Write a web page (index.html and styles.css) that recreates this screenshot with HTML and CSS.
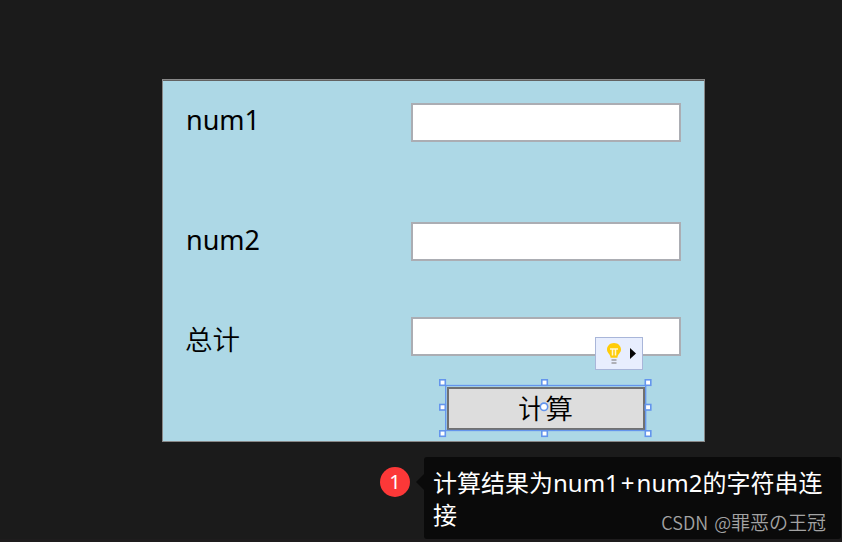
FILE: index.html
```html
<!DOCTYPE html>
<html lang="zh-CN">
<head>
<meta charset="utf-8">
<title>num1 + num2</title>
<link rel="stylesheet" href="styles.css">
</head>
<body>
<main class="designer">
  <section class="form">
    <div class="row row-one"><label class="label" for="n1"><span class="latin">num1</span></label><input class="field" id="n1"></div>
    <div class="row row-two"><label class="label" for="n2"><span class="latin">num2</span></label><input class="field" id="n2"></div>
    <div class="row row-sum"><label class="label" for="sum"><span class="han">总计</span></label>
      <div class="field-wrap"><input class="field" id="sum">
        <div class="hint">
          <svg class="hint-icon" width="48" height="33" viewBox="0 0 48 33">
            <path d="M19 6c-4.2 0-7 2.9-7 6.6 0 3.4 3.2 4.4 3.6 8.1h6.8c.4-3.7 3.6-4.7 3.6-8.1 0-3.7-2.8-6.6-7-6.6z" fill="#ffcc08"/>
            <path d="M15 12h8M17.5 12.5v6M20.5 12.5v6" fill="none" stroke="#fff6cf" stroke-width="1.5"/>
            <path d="M16.5 23h5M16.5 26h5" stroke="#9c9ca0" stroke-width="1.6"/>
            <path d="M35 11l6 5.5-6 5.5z" fill="#050505"/>
          </svg>
        </div>
      </div>
    </div>
    <div class="actions">
      <div class="selection">
        <button class="calc"><span>计算</span></button>
        <svg class="adorner" width="216" height="60" viewBox="0 0 216 60">
          <rect x="7.7" y="7.5" width="200" height="45" fill="none" stroke="#6495ed" stroke-width="1.3"/>
          <g fill="#fff" stroke="#6495ed" stroke-width="1.6">
            <rect x="1.8" y="1.8" width="5.5" height="5.5"/><rect x="103.8" y="1.8" width="5.5" height="5.5"/><rect x="207.3" y="1.8" width="5.5" height="5.5"/>
            <rect x="1.8" y="26.5" width="5.5" height="5.5"/><rect x="207.3" y="26.5" width="5.5" height="5.5"/>
            <rect x="1.8" y="52.8" width="5.5" height="5.5"/><rect x="103.8" y="52.8" width="5.5" height="5.5"/><rect x="207.3" y="52.8" width="5.5" height="5.5"/>
            <circle cx="106" cy="28.8" r="3.7"/>
          </g>
        </svg>
      </div>
    </div>
  </section>
  <section class="note">
    <span class="badge">1</span>
    <span class="arrow"></span>
    <div class="bubble"><p class="text">计算结果为<span class="note-latin">num1<span class="plus">+</span>num2</span>的字符串连<br>接</p><span class="watermark"><span class="watermark-latin">CSDN @</span>罪恶の王冠</span></div>
  </section>
</main>
</body>
</html>
```
FILE: styles.css
```css
* { box-sizing: border-box; }
body {
  margin: 0;
  background: #1b1b1b;
  font-family: "Noto Sans", "Noto Sans CJK SC", sans-serif;
}
.designer {
  width: 842px;
  height: 542px;
  padding: 79px 0 0 162px;
  overflow: hidden;
  border-bottom: 3px solid #1e1c1d;
}
.form {
  width: 543px;
  height: 363px;
  padding: 23px 23px 0;
  background: #add8e6;
  border: 1px solid #888;
  box-shadow: inset 0 1px #626262;
  color: #000;
}
.row {
  display: flex;
  justify-content: space-between;
  height: 39px;
}
.row-two { margin-top: 80px; }
.row-sum { margin-top: 56px; }
.label {
  display: flex;
  align-items: center;
  font-size: 27px;
  line-height: 39px;
  white-space: nowrap;
}
.latin { margin-top: -4px; }
.row-one .latin { margin-top: -6px; }
.han {
  margin: 4px 0 0 -1px;
  font: 350 27.5px/39px "Noto Sans CJK SC", sans-serif;
}
.field {
  display: block;
  width: 270px;
  height: 39px;
  padding: 0 6px;
  border: 2px solid #abadb3;
  border-radius: 0;
  background: #fff;
  outline: 0;
}
.field-wrap { position: relative; }
.hint {
  position: absolute;
  left: 184px;
  top: 20px;
  width: 48px;
  height: 33px;
  background: #e8eefe;
  box-shadow: inset 0 0 0 1px #a9b6d9;
}
.hint-icon { display: block; }
.actions {
  display: flex;
  justify-content: flex-end;
  margin: 31px 36px 0 0;
}
.selection { position: relative; width: 198px; height: 43px; }
.calc {
  display: block;
  width: 198px;
  height: 43px;
  padding: 0 1px 2px 0;
  border: 2px solid #707070;
  border-radius: 0;
  background: #ddd;
  color: #000;
  font: 350 27.5px/37px "Noto Sans CJK SC", sans-serif;
}
.adorner { position: absolute; left: -9px; top: -9px; }
.note {
  display: flex;
  align-items: flex-start;
  margin: 15px 0 0 218px;
}
.badge {
  width: 30px;
  height: 30px;
  margin-top: 10px;
  border-radius: 50%;
  background: #fc3838;
  color: #fff;
  font: 20px/29px "Noto Sans", sans-serif;
  text-align: center;
}
.arrow {
  margin: 17px 0 0 6px;
  border: 8px solid transparent;
  border-left: 0;
  border-right-color: #0a0a0a;
}
.bubble {
  position: relative;
  width: 417px;
  height: 82px;
  padding: 9px 0 0 9px;
  border-radius: 3px;
  background: #0a0a0a;
}
.text {
  margin: 0;
  color: #fff;
  font: 24px/32px "Noto Sans CJK SC", sans-serif;
  white-space: nowrap;
}
.note-latin { font-family: "Noto Sans", sans-serif; line-height: 1; }
.plus { margin: 0 2px; }
.watermark {
  position: absolute;
  right: 15px;
  bottom: 5px;
  color: #a3a3a3;
  font: 350 19px/24px "Noto Sans CJK SC", sans-serif;
  white-space: nowrap;
}
.watermark-latin { font-size: 18px; line-height: 1; word-spacing: 2px; }
```
